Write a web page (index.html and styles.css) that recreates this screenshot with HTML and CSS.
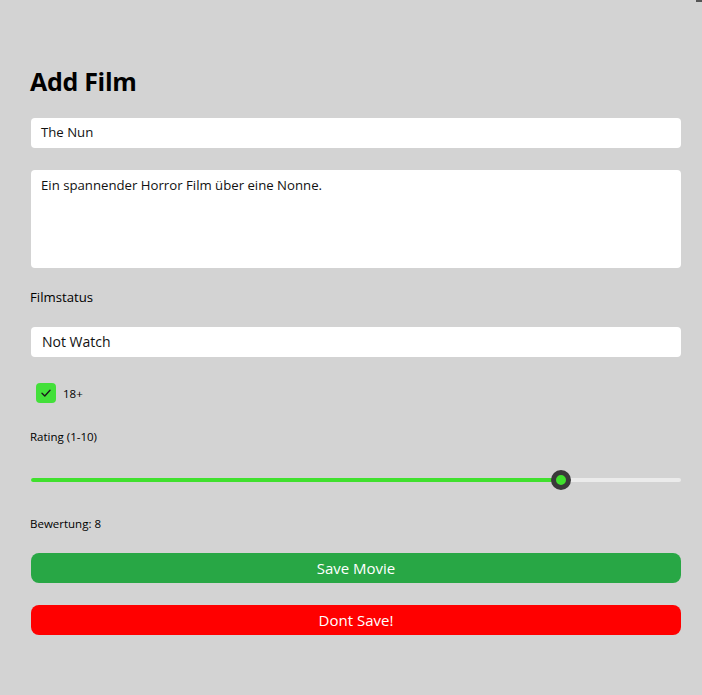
FILE: index.html
```html
<!DOCTYPE html>
<html lang="de">
<head>
<meta charset="utf-8">
<title>Add Film</title>
<link rel="stylesheet" href="styles.css">
</head>
<body>
<div class="corner"></div>
<main class="page">
  <h1 class="title">Add Film</h1>
  <div class="entry">The Nun</div>
  <div class="editor">Ein spannender Horror Film über eine Nonne.</div>
  <div class="label">Filmstatus</div>
  <div class="picker">Not Watch</div>
  <div class="check-row">
    <span class="checkbox">
      <svg width="12" height="12" viewBox="0 0 12 12"><path d="M2 6.3 L4.8 9 L10 3.3" fill="none" stroke="#1a1a1a" stroke-width="1.4" stroke-linecap="round" stroke-linejoin="round"/></svg>
    </span>
    <span class="check-label">18+</span>
  </div>
  <div class="small-label rating-label">Rating (1-10)</div>
  <div class="slider">
    <div class="track">
      <div class="fill" style="width: 530px"></div>
    </div>
    <div class="thumb" style="left: 520px"></div>
  </div>
  <div class="small-label value-label">Bewertung: 8</div>
  <button class="btn btn-save">Save Movie</button>
  <button class="btn btn-cancel">Dont Save!</button>
</main>
</body>
</html>
```
FILE: styles.css
```css
* { box-sizing: border-box; }
html, body {
  margin: 0;
  padding: 0;
  background: #d3d3d3;
  font-family: "Open Sans", "Noto Sans", sans-serif;
  color: #000;
}
.corner {
  position: absolute;
  top: 0;
  right: 0;
  width: 6px;
  height: 2px;
  background: #555;
}
.page {
  display: flex;
  flex-direction: column;
  padding: 64px 21px 40px 31px;
}
.title {
  margin: 0 0 0 -1px;
  font-size: 25px;
  font-weight: 700;
  line-height: 34px;
  letter-spacing: -0.3px;
}
.entry, .editor, .picker {
  background: #fff;
  border-radius: 4px;
  font-size: 13.2px;
  color: #111;
}
.entry {
  margin-top: 20px;
  height: 30px;
  padding: 0 10px;
  line-height: 29px;
}
.editor {
  margin-top: 22px;
  height: 98px;
  padding: 5px 10px;
  line-height: 20px;
}
.label {
  margin-top: 19px;
  margin-left: -1px;
  font-size: 13.2px;
  line-height: 20px;
}
.picker {
  margin-top: 20px;
  height: 30px;
  padding: 0 11px;
  line-height: 30px;
  font-size: 14px;
}
.check-row {
  margin-top: 26px;
  display: flex;
  align-items: center;
  gap: 7px;
  padding-left: 5px;
}
.checkbox {
  width: 20px;
  height: 20px;
  border-radius: 4px;
  background: #43e03a;
  display: flex;
  align-items: center;
  justify-content: center;
}
.check-label {
  font-size: 11.5px;
}
.small-label {
  font-size: 11.5px;
  line-height: 16px;
  margin-left: -1px;
}
.rating-label {
  margin-top: 26px;
}
.slider {
  position: relative;
  margin-top: 25px;
  height: 20px;
  display: flex;
  align-items: center;
}
.track {
  width: 100%;
  height: 4px;
  border-radius: 2px;
  background: #ebebeb;
  overflow: hidden;
}
.fill {
  height: 100%;
  background: #40e02e;
}
.thumb {
  position: absolute;
  top: 0;
  width: 20px;
  height: 20px;
  border-radius: 50%;
  border: 5px solid #3a3a3a;
  background: #40e02e;
}
.value-label {
  margin-top: 26px;
}
.btn {
  display: block;
  width: 100%;
  height: 30px;
  border: none;
  border-radius: 8px;
  color: #fff;
  font-family: inherit;
  font-size: 15px;
  padding: 0;
}
.btn-save {
  margin-top: 21px;
  background: #28a745;
}
.btn-cancel {
  margin-top: 22px;
  background: #ff0000;
}
```
